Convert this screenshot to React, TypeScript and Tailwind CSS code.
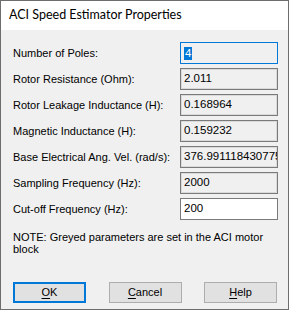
import React from 'react';

type Field = {
  label: string;
  value: string;
  kind: 'focus' | 'grey' | 'edit';
};

const fields: Field[] = [
  { label: 'Number of Poles:', value: '4', kind: 'focus' },
  { label: 'Rotor Resistance (Ohm):', value: '2.011', kind: 'grey' },
  { label: 'Rotor Leakage Inductance (H):', value: '0.168964', kind: 'grey' },
  { label: 'Magnetic Inductance (H):', value: '0.159232', kind: 'grey' },
  { label: 'Base Electrical Ang. Vel. (rad/s):', value: '376.991118430775', kind: 'grey' },
  { label: 'Sampling Frequency (Hz):', value: '2000', kind: 'grey' },
  { label: 'Cut-off Frequency (Hz):', value: '200', kind: 'edit' },
];

function FieldRow({ label, value, kind }: Field) {
  const box =
    kind === 'focus'
      ? 'border-[#0078d7] bg-[#f0f0f0]'
      : kind === 'grey'
        ? 'border-[#7a7a7a] bg-[#f0f0f0] shadow-[inset_0_0_0_1px_#dadada]'
        : 'border-[#7a7a7a] bg-white';
  return (
    <div className="flex h-[22px] items-center">
      <span className="flex-1 whitespace-nowrap text-[11px] text-black">{label}</span>
      <div className={`flex h-[22px] w-[98px] items-center overflow-hidden border pl-[3px] ${box}`}>
        {kind === 'focus' ? (
          <span className="bg-[#0078d7] px-[1px] text-[11.5px] leading-[13px] text-white">{value}</span>
        ) : (
          <span className="whitespace-nowrap text-[11.5px] text-black">{value}</span>
        )}
      </div>
    </div>
  );
}

function DlgButton({ mnemonic, rest, focused }: { mnemonic: string; rest: string; focused?: boolean }) {
  return (
    <button
      className={`flex h-[21px] w-[73px] items-center justify-center bg-[#e1e1e1] text-[11px] text-black ${
        focused ? 'border-2 border-[#0078d7]' : 'border border-[#adadad]'
      }`}
    >
      <span className="underline underline-offset-2">{mnemonic}</span>
      {rest}
    </button>
  );
}

export default function App() {
  return (
    <div className="h-[312px] w-[289px] overflow-hidden bg-white font-['Liberation_Sans',Arial,sans-serif]">
      <div className="flex h-[310px] flex-col border border-[#6d6d6d]">
        <div className="flex h-[29px] items-center bg-white pl-[8px] font-['Lato',sans-serif] text-[12.5px] text-black">
          ACI Speed Estimator Properties
        </div>
        <div className="flex flex-1 flex-col bg-[#f0f0f0] pl-[12px] pr-[10px] pt-[12px]">
          <div className="flex flex-col gap-[4px]">
            {fields.map((f) => (
              <FieldRow key={f.label} {...f} />
            ))}
          </div>
          <p className="mt-[11px] text-[11px] leading-[12px] text-black">
            NOTE: Greyed parameters are set in the ACI motor
            <br />
            block
          </p>
          <div className="mt-[27px] flex justify-between pr-[1px]">
            <DlgButton mnemonic="O" rest="K" focused />
            <DlgButton mnemonic="C" rest="ancel" />
            <DlgButton mnemonic="H" rest="elp" />
          </div>
        </div>
      </div>
    </div>
  );
}
